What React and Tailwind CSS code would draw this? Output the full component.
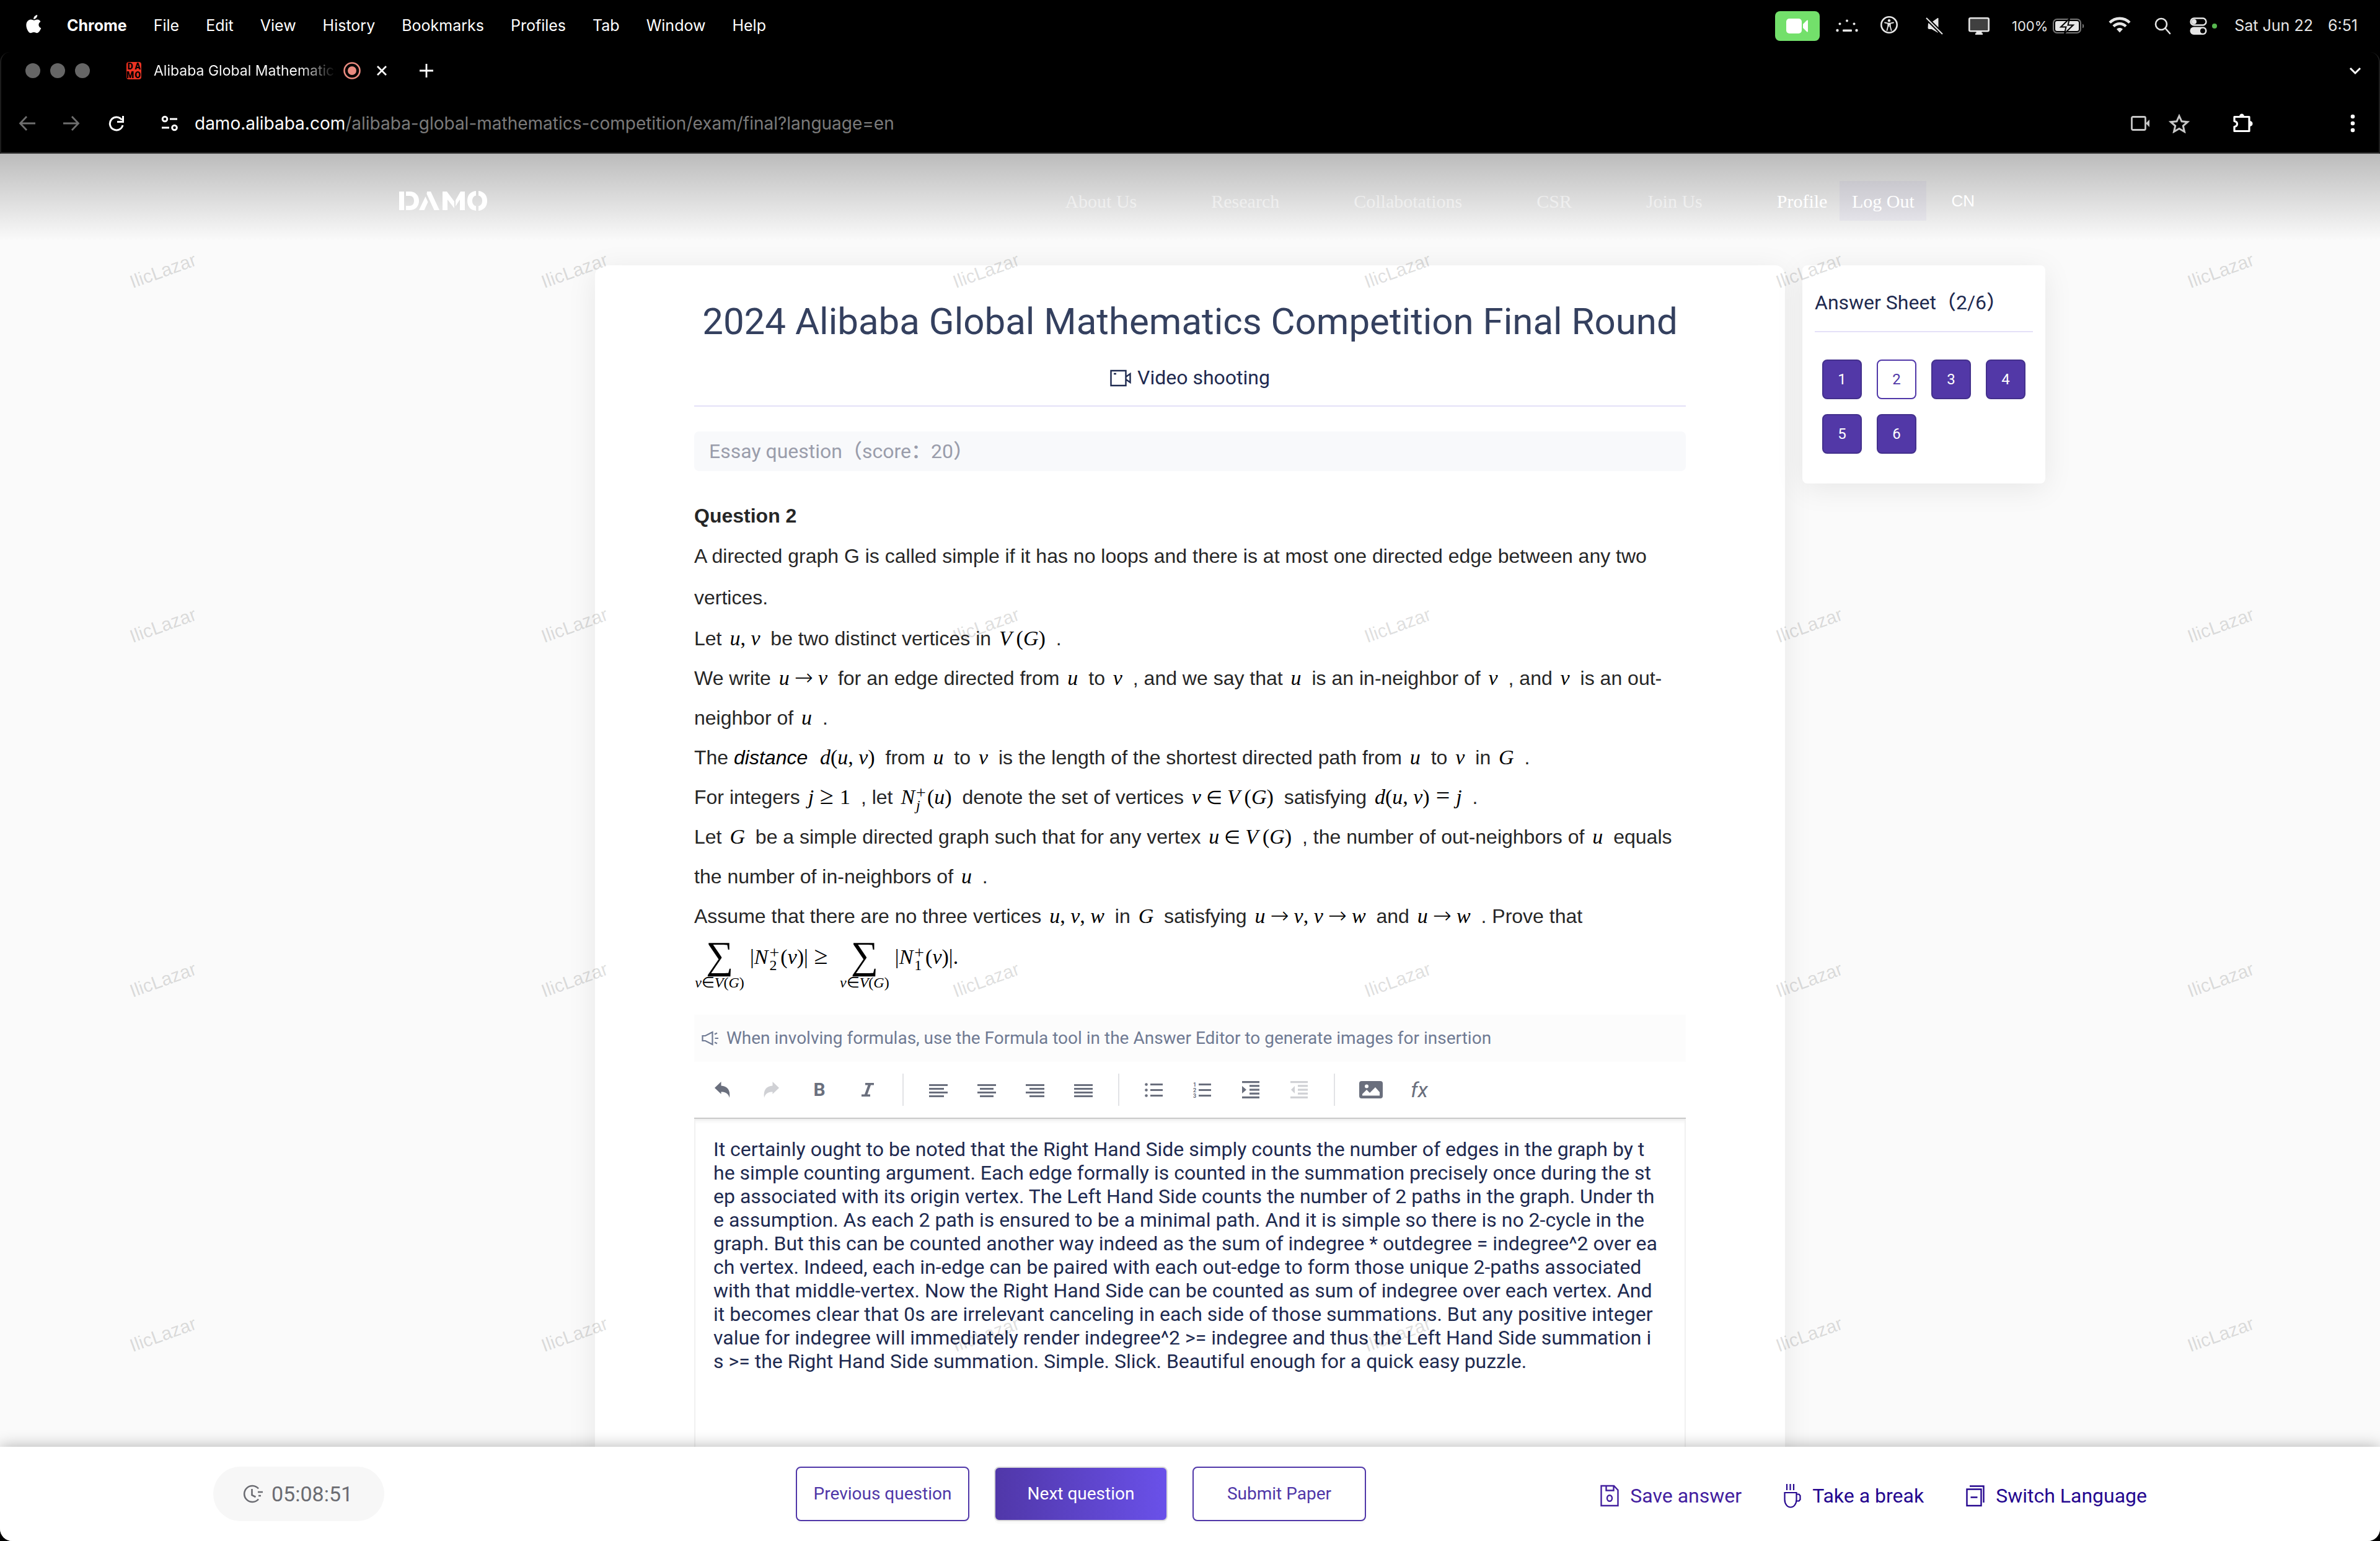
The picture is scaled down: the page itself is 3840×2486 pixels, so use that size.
import React from "react";

const SANS = "font-['Liberation_Sans',Arial,sans-serif]";
const ROBOTO = "font-[Roboto,'Noto_Sans_CJK_SC',sans-serif]";

/* ---------- system menu bar ---------- */

const MENUS = ["File", "Edit", "View", "History", "Bookmarks", "Profiles", "Tab", "Window", "Help"];

function MenuBar() {
  return (
    <header className="flex h-[84px] shrink-0 items-center bg-black pl-[42px] pr-9 font-[Inter,sans-serif] text-[25px] text-white">
      <svg className="mb-1 h-8 w-[26px]" viewBox="0 0 26 32" fill="#fff" aria-hidden="true">
        <path d="M18.2 0c.2 1.8-.5 3.500-1.600 4.800-1.100 1.300-2.800 2.200-4.400 2.100-.2-1.700.6-3.500 1.600-4.600C14.900 1 16.800.1 18.200 0z" />
        <path d="M23.400 10.900c-2 1.200-3 2.900-3 5 0 2.500 1.500 4.500 3.900 5.400-.5 1.500-1.200 2.900-2.100 4.200-1.300 1.900-2.600 3.700-4.700 3.700-2 0-2.600-1.200-4.900-1.200s-3.100 1.200-4.900 1.300c-2 .1-3.500-2-4.800-3.900C.5 21.800-1 14.900 2 10.800c1.300-2 3.500-3.300 5.800-3.300 2.200 0 3.500 1.200 5.300 1.200 1.700 0 2.800-1.200 5.300-1.200 1.900 0 3.800 1 5 3.400z" />
      </svg>
      <nav className="ml-10 flex items-center gap-[43px]">
        <button className="font-bold">Chrome</button>
        {MENUS.map((m) => (
          <button key={m}>{m}</button>
        ))}
      </nav>
      <div className="ml-auto flex items-center">
        <span className="flex h-12 w-[72px] items-center justify-center rounded-lg bg-[#73e06b]">
          <svg className="h-[24px] w-[36px]" viewBox="0 0 36 24" fill="#fff" aria-hidden="true">
            <rect x="0" y="0" width="25" height="24" rx="5" />
            <path d="M27 9l6-6c1.200-1 2-.6 2 .8v16.400c0 1.400-.8 1.800-2 .8l-6-6z" />
          </svg>
        </span>
        <svg className="ml-[26px] h-6 w-9" viewBox="0 0 36 24" fill="#e6e6e6" aria-hidden="true">
          <circle cx="2.500" cy="19" r="2.200" /><circle cx="33.500" cy="19" r="2.200" />
          <circle cx="6.500" cy="8.500" r="2" /><circle cx="29.500" cy="8.500" r="2" /><circle cx="18" cy="3.500" r="2" />
          <rect x="11" y="17.500" width="15" height="3.500" rx="1" />
        </svg>
        <svg className="ml-9 mb-1 size-7" viewBox="0 0 28 28" fill="none" stroke="#e6e6e6" aria-hidden="true">
          <circle cx="14" cy="14" r="12.700" strokeWidth="2.600" />
          <circle cx="14" cy="7.200" r="2.200" fill="#e6e6e6" stroke="none" />
          <path d="M7 10.500l5 1.200h4l5-1.200M14 12v4M12.200 12v4.500L10.500 23M15.800 12v4.500L17.500 23" strokeWidth="1.800" strokeLinecap="round" />
        </svg>
        <svg className="ml-[45px] h-7 w-7" viewBox="0 0 28 28" aria-hidden="true">
          <path d="M4 9.500L8 9 19 1.200c1-.7 1.500-.2 1.500 1v21c0 1.500-.8 1.800-1.800 1L9.500 19H6c-1.500 0-2.500-1-2.500-2z" fill="#e6e6e6" />
          <path d="M1 1l26 26" stroke="#000" strokeWidth="6" />
          <path d="M1 1l26 26" stroke="#e6e6e6" strokeWidth="2" />
        </svg>
        <svg className="ml-[41px] h-7 w-[34px]" viewBox="0 0 34 28" aria-hidden="true">
          <rect x="1.300" y="1.300" width="31.400" height="21" rx="2" fill="#404040" stroke="#e6e6e6" strokeWidth="2.600" />
          <path d="M12.500 23h9v2.500h1.500v2.500h-12v-2.500h1.500z" fill="#e6e6e6" />
        </svg>
        <span className="ml-9 text-[22px] text-[#e6e6e6]">100%</span>
        <svg className="ml-2 h-6 w-[52px]" viewBox="0 0 52 24" aria-hidden="true">
          <rect x="1" y="1" width="44" height="22" rx="6" fill="none" stroke="#777" strokeWidth="2" />
          <rect x="4" y="4" width="38" height="16" rx="3" fill="#e6e6e6" />
          <path d="M48 8.500c3 1 3 6 0 7z" fill="#777" />
          <path d="M27 0L13 13.500h8.500L19 24l14-13.500h-8.500z" fill="#e6e6e6" stroke="#000" strokeWidth="2" />
        </svg>
        <svg className="ml-[38px] mb-1 h-[26px] w-[36px]" viewBox="0 0 36 26" fill="none" stroke="#e6e6e6" strokeWidth="4.500" aria-hidden="true">
          <path d="M2 9.500c9-9 23-9 32 0" /><path d="M8 15.500c5.600-5.600 14.400-5.600 20 0" />
          <path d="M18 25.500l-5-5.500c3-2.600 7-2.600 10 0z" fill="#e6e6e6" stroke="none" />
        </svg>
        <svg className="ml-[38px] h-7 w-7" viewBox="0 0 28 28" fill="none" stroke="#e6e6e6" strokeWidth="2.600" strokeLinecap="round" aria-hidden="true">
          <circle cx="11" cy="11" r="9" /><path d="M17.500 17.500L25 26" />
        </svg>
        <svg className="ml-[29px] h-7 w-7" viewBox="0 0 28 28" fill="none" stroke="#e6e6e6" strokeWidth="2.400" aria-hidden="true">
          <rect x="1.500" y="1.500" width="25" height="11" rx="5.500" /><circle cx="7" cy="7" r="4" fill="#e6e6e6" stroke="none" />
          <rect x="0.500" y="15.500" width="27" height="12.500" rx="6" fill="#e6e6e6" stroke="none" /><circle cx="21" cy="21.700" r="4" fill="#000" stroke="none" />
        </svg>
        <span className="ml-2 size-2 rounded-full bg-[#57b84f]" />
        <span className="ml-7 text-[#e6e6e6]">Sat Jun 22</span>
        <span className="ml-6 text-[#e6e6e6]">6:51</span>
      </div>
    </header>
  );
}

/* ---------- browser chrome ---------- */

function TabStrip() {
  return (
    <div className="flex h-[60px] shrink-0 items-center rounded-t-2xl border-x-2 border-[#1c1c1c] bg-black pl-[39px] pr-[26px] text-white">
      <div className="flex gap-4">
        <span className="size-6 rounded-full bg-[#666]" />
        <span className="size-6 rounded-full bg-[#666]" />
        <span className="size-6 rounded-full bg-[#666]" />
      </div>
      <span className="ml-[59px] grid h-[28px] w-6 grid-cols-2 place-items-center rounded-sm bg-[#ec3323] font-[Roboto,sans-serif] text-[14px] leading-[14px] font-black text-black">
        <span>D</span><span>A</span><span>M</span><span>O</span>
      </span>
      <span className="ml-5 w-[294px] overflow-hidden bg-gradient-to-r from-white from-80% to-transparent bg-clip-text font-[Inter,sans-serif] text-[23px] whitespace-nowrap text-transparent">
        Alibaba Global Mathematics
      </span>
      <svg className="ml-3 size-7" viewBox="0 0 28 28" aria-hidden="true">
        <circle cx="14" cy="14" r="12.500" fill="none" stroke="#e98b80" strokeWidth="2.600" /><circle cx="14" cy="14" r="7" fill="#e98b80" />
      </svg>
      <button className="ml-[24px]" aria-label="Close tab">
        <svg className="size-5" viewBox="0 0 20 20" stroke="#fff" strokeWidth="2.800"><path d="M3 3l14 14M17 3L3 17" /></svg>
      </button>
      <button className="ml-[51px]" aria-label="New tab">
        <svg className="size-[22px]" viewBox="0 0 22 22" stroke="#fff" strokeWidth="2.800"><path d="M11 0v22M0 11h22" /></svg>
      </button>
      <button className="ml-auto" aria-label="Search tabs">
        <svg className="h-5 w-6" viewBox="0 0 24 20" fill="none" stroke="#fff" strokeWidth="3"><path d="M4 6l8 8 8-8" /></svg>
      </button>
    </div>
  );
}

function AddressBar() {
  return (
    <div className="flex h-[104px] shrink-0 items-center border-x-2 border-b-2 border-[#1c1c1c] border-b-[#3a3a3a] bg-black pt-2 pl-[28px] pr-[38px]">
      <button aria-label="Back"><svg className="h-6 w-7" viewBox="0 0 28 24" fill="none" stroke="#6e6e6e" strokeWidth="2.800"><path d="M27 12H3M13 1L2.500 12 13 23" /></svg></button>
      <button className="ml-[43px]" aria-label="Forward"><svg className="h-6 w-7" viewBox="0 0 28 24" fill="none" stroke="#6e6e6e" strokeWidth="2.800"><path d="M1 12h24M15 1l10.500 11L15 23" /></svg></button>
      <button className="ml-[45px]" aria-label="Reload">
        <svg className="h-[26px] w-7" viewBox="0 0 28 26" fill="none" stroke="#fff" strokeWidth="3"><path d="M22.500 7.500A10.500 10.500 0 1 0 24 16" /><path d="M24.500 1v9.500h-9.500" /></svg>
      </button>
      <svg className="ml-[58px] h-[26px] w-[28px]" viewBox="0 0 28 26" fill="none" stroke="#fff" strokeWidth="3" aria-hidden="true">
        <circle cx="6" cy="6" r="3.800" /><path d="M14 6h12" /><circle cx="21.500" cy="20" r="3.800" /><path d="M1 20h12" />
      </svg>
      <div role="textbox" aria-label="Address" className="ml-[26px] flex-1 font-[Inter,sans-serif] text-[28px] text-[#7a7a7a]">
        <span className="text-white">damo.alibaba.com</span>/alibaba-global-mathematics-competition/exam/final?language=en
      </div>
      <svg className="h-6 w-8" viewBox="0 0 32 24" fill="none" stroke="#c7c7c7" strokeWidth="2.800" aria-hidden="true">
        <rect x="1.500" y="1.500" width="22" height="21" rx="2" /><path d="M24 12l6-6v12z" fill="#c7c7c7" stroke="none" />
      </svg>
      <svg className="ml-[29px] h-8 w-[34px]" viewBox="0 0 34 32" fill="none" stroke="#c7c7c7" strokeWidth="3" aria-hidden="true">
        <path d="M17 4l4 8.800 9.500.9-7.200 6.300 2.200 9.500L17 24.500l-8.500 5 2.200-9.500L3.500 13.700l9.500-.9z" />
      </svg>
      <svg className="ml-[69px] h-8 w-[34px]" viewBox="0 0 34 32" aria-hidden="true">
        <path d="M3 5.500h24v23H3v-7c6-1 6-8 0-9z" fill="none" stroke="#fff" strokeWidth="3.200" strokeLinejoin="round" />
        <path d="M11 5c0-6 8-6 8 0zM28 12c6 0 6 9 0 9z" fill="#fff" />
      </svg>
      <svg className="ml-[156px] h-[30px] w-2" viewBox="0 0 8 30" fill="#fff" aria-hidden="true">
        <circle cx="4" cy="4" r="3.300" /><circle cx="4" cy="15" r="3.300" /><circle cx="4" cy="26" r="3.300" />
      </svg>
    </div>
  );
}

/* ---------- site header ---------- */

const NAV = ["About Us", "Research", "Collabotations", "CSR", "Join Us"];

function SiteHeader() {
  return (
    <header className="flex h-[140px] items-center bg-gradient-to-b from-black/25 to-transparent pt-3 pl-[644px] pr-[654px] font-['Liberation_Serif','Times_New_Roman',serif] text-[30px] text-white">
      <a href="#home" aria-label="DAMO">
        <svg className="h-8 w-[144px]" viewBox="0 0 144 32" fill="#fff" aria-hidden="true">
          <path d="M0 1h8v30H0zM11 1h6c9 0 15 6 15 15s-6 15-15 15h-6v-7h6c4.500 0 7-3 7-8s-2.500-8-7-8h-6z" />
          <path d="M45 1h6l14 30h-8.500L44.500 5zM42.500 9l4 9-6 13H32z" />
          <path d="M70 1h7l12 16v11l-11-14v17h-8zM91 15l8-14h7v30h-8V14l-7 11z" />
          <path d="M124 0v7.500c-4 1-6 4-6 8.500s2 7.500 6 8.500V32c-9-1-14-7-14-16s5-15 14-16zM128 0v7.500c4 1 6 4 6 8.500s-2 7.500-6 8.500V32c9-1 14-7 14-16s-5-15-14-16z" />
        </svg>
      </a>
      <nav className="ml-auto flex gap-[120px] text-white/50">
        {NAV.map((n) => (
          <a key={n} href="#nav">{n}</a>
        ))}
      </nav>
      <a href="#profile" className="ml-[120px]">Profile</a>
      <button className="ml-5 h-16 w-[140px] bg-[#5037a8]/5">Log Out</button>
      <a href="#cn" className={"ml-10 text-[26px] " + SANS}>CN</a>
    </header>
  );
}

/* ---------- question ---------- */

function M({ children }) {
  return <span className="mr-2 ml-1 font-['Liberation_Serif','Times_New_Roman',serif] text-[34px] leading-none text-black italic">{children}</span>;
}
const Up = ({ children }) => <span className="not-italic">{children}</span>;
const Arrow = () => <span className="mx-2 not-italic font-['DejaVu_Sans',sans-serif] text-[36px] leading-none font-extralight">→</span>;
const In = () => <span className="mx-2 not-italic font-['DejaVu_Sans',sans-serif] text-[30px] leading-none font-extralight">∈</span>;
const Rel = ({ children }) => <span className="mx-[10px] not-italic text-[40px] leading-none">{children}</span>;
const VG = () => <>V<Up>&thinsp;(</Up>G<Up>)</Up></>;
function Scripts({ sub }) {
  return (
    <span className="mx-[2px] inline-flex flex-col items-start align-middle text-[24px] leading-5 not-italic">
      <span className="text-[28px]">+</span>
      <span className={sub === "j" ? "italic" : ""}>{sub}</span>
    </span>
  );
}
function Sum() {
  return (
    <span className="flex w-[82px] flex-col items-center">
      <span className="h-[56px] text-[62px] leading-[58px] not-italic">∑</span>
      <span className="text-[24px] leading-[34px] whitespace-nowrap">v<Up>∈</Up>V<Up>(</Up>G<Up>)</Up></span>
    </span>
  );
}

function Question() {
  return (
    <section className={"mt-10 text-[32px] leading-[64px] text-[#262626] " + SANS}>
      <h2 className="font-bold">Question 2</h2>
      <p className="leading-[67px]">A directed graph G is called simple if it has no loops and there is at most one directed edge between any two<br />vertices.</p>
      <p>Let <M>u<Up>,</Up> v</M> be two distinct vertices in <M><VG /></M> .</p>
      <p>We write <M>u<Arrow />v</M> for an edge directed from <M>u</M> to <M>v</M> , and we say that <M>u</M> is an in-neighbor of <M>v</M> , and <M>v</M> is an out-<br />neighbor of <M>u</M> .</p>
      <p>The <em className="text-black">distance</em> <M>&thinsp;d<Up>(</Up>u<Up>,</Up> v<Up>)</Up></M> from <M>u</M> to <M>v</M> is the length of the shortest directed path from <M>u</M> to <M>v</M> in <M>G</M> .</p>
      <p className="h-16">For integers <M>j<Rel>≥</Rel><Up>1</Up></M> , let <M>N<Scripts sub="j" /><Up>(</Up>u<Up>)</Up></M> denote the set of vertices <M>v<In /><VG /></M> satisfying <M>d<Up>(</Up>u<Up>,</Up> v<Up>)</Up><Rel>=</Rel>j</M> .</p>
      <p>Let <M>G</M> be a simple directed graph such that for any vertex <M>u<In /><VG /></M> , the number of out-neighbors of <M>u</M> equals<br />the number of in-neighbors of <M>u</M> .</p>
      <p>Assume that there are no three vertices <M>u<Up>,</Up> v<Up>,</Up> w</M> in <M>G</M> satisfying <M>u<Arrow />v<Up>,</Up> v<Arrow />w</M> and <M>u<Arrow />w</M> . Prove that</p>
      <div className="flex h-[127px] items-start pt-[2px] font-['Liberation_Serif','Times_New_Roman',serif] text-[34px] text-black italic">
        <Sum />
        <span className="mx-2 whitespace-nowrap"><Up>|</Up>N<Scripts sub="2" /><Up>(</Up>v<Up>)|</Up><Rel>≥</Rel></span>
        <Sum />
        <span className="ml-2 whitespace-nowrap"><Up>|</Up>N<Scripts sub="1" /><Up>(</Up>v<Up>)|.</Up></span>
      </div>
    </section>
  );
}

/* ---------- answer editor ---------- */

const BARS = {
  left: [[0, 30], [0, 24], [0, 30], [0, 24]],
  center: [[0, 30], [4, 22], [0, 30], [4, 22]],
  right: [[0, 30], [6, 24], [0, 30], [6, 24]],
  justify: [[0, 30], [0, 30], [0, 30], [0, 30]],
};

function AlignIcon({ kind }) {
  return (
    <svg className="h-[26px] w-[30px]" viewBox="0 0 30 26" fill="#6a6f7d" aria-hidden="true">
      {BARS[kind].map(([x, w], i) => <rect key={i} x={x} y={4 + i * 6} width={w} height="3" />)}
    </svg>
  );
}

function ListIcon({ ordered }) {
  return (
    <svg className="h-[26px] w-[30px]" viewBox="0 0 30 26" fill="#6a6f7d" aria-hidden="true">
      {[3, 12, 21].map((y, i) => (
        <g key={y}>
          {ordered
            ? <text x="0" y={y + 5} fontSize="9" fontWeight="700" fontFamily="Roboto, sans-serif">{i + 1}</text>
            : <circle cx="2.500" cy={y + 1.500} r="2.300" />}
          <rect x="9" y={y} width="20" height="3" />
        </g>
      ))}
    </svg>
  );
}

function IndentIcon({ out }) {
  return (
    <svg className="h-[30px] w-[28px]" viewBox="0 0 28 30" fill={out ? "#d0d1d5" : "#6a6f7d"} aria-hidden="true">
      <path d={out ? "M7 9v12l-6-6z" : "M0 9v12l7-6z"} />
      <rect y="1" width="28" height="3.200" /><rect x="12" y="7.200" width="16" height="3.200" />
      <rect x="12" y="13.400" width="16" height="3.200" /><rect x="12" y="19.600" width="16" height="3.200" /><rect y="25.800" width="28" height="3.200" />
    </svg>
  );
}

function Tool({ label, children }) {
  return <button aria-label={label} className="flex h-[60px] w-[78px] items-center justify-center text-[#6a6f7d]">{children}</button>;
}
const Divider = () => <span className="mx-[17px] h-[52px] w-[2px] bg-[#e2e3e6]" />;

const ANSWER = [
  "It certainly ought to be noted that the Right Hand Side simply counts the number of edges in the graph by t",
  "he simple counting argument. Each edge formally is counted in the summation precisely once during the st",
  "ep associated with its origin vertex. The Left Hand Side counts the number of 2 paths in the graph. Under th",
  "e assumption. As each 2 path is ensured to be a minimal path. And it is simple so there is no 2-cycle in the",
  "graph. But this can be counted another way indeed as the sum of indegree * outdegree = indegree^2 over ea",
  "ch vertex. Indeed, each in-edge can be paired with each out-edge to form those unique 2-paths associated",
  "with that middle-vertex. Now the Right Hand Side can be counted as sum of indegree over each vertex. And",
  "it becomes clear that 0s are irrelevant canceling in each side of those summations. But any positive integer",
  "value for indegree will immediately render indegree^2 >= indegree and thus the Left Hand Side summation i",
  "s >= the Right Hand Side summation. Simple. Slick. Beautiful enough for a quick easy puzzle.",
].join("\n");

function Editor() {
  return (
    <section>
      <p className="flex h-[76px] items-center bg-[#fcfcfc] pl-3 text-[28px] font-[450] text-[#6f7a93]">
        <svg className="mr-3 h-6 w-7" viewBox="0 0 28 24" fill="none" stroke="#6f7a93" strokeWidth="2.200" aria-hidden="true">
          <path d="M1.500 8v8h4.500L17.500 22V2L6 8z" /><path d="M21 5.500l4-2M21.500 12H27M21 18.500l4 2" />
        </svg>
        When involving formulas, use the Formula tool in the Answer Editor to generate images for insertion
      </p>
      <div role="toolbar" aria-label="Formatting" className="flex h-[92px] items-center border-b-2 border-[#c9c9c9] pl-[7px]">
        <Tool label="Undo"><svg className="h-[28px] w-[26px]" viewBox="0 0 26 28" fill="#6a6f7d"><path d="M0 11L10.500 1v6.500C20 8 26 14 24 27c-2-7-6-9.500-13.500-9.500V21z" /></svg></Tool>
        <Tool label="Redo"><svg className="h-[28px] w-[26px]" viewBox="0 0 26 28" fill="#d0d1d5"><path d="M26 11L15.500 1v6.500C6 8 0 14 2 27c2-7 6-9.500 13.500-9.500V21z" /></svg></Tool>
        <Tool label="Bold"><span className="text-[30px] leading-none font-bold">B</span></Tool>
        <Tool label="Italic"><svg className="h-[22px] w-5" viewBox="0 0 20 22" fill="#6a6f7d"><path d="M6 0h14v3.500h-5L9.500 18.500H14V22H0v-3.500h5L10.500 3.500H6z" /></svg></Tool>
        <Divider />
        <Tool label="Align left"><AlignIcon kind="left" /></Tool>
        <Tool label="Align center"><AlignIcon kind="center" /></Tool>
        <Tool label="Align right"><AlignIcon kind="right" /></Tool>
        <Tool label="Justify"><AlignIcon kind="justify" /></Tool>
        <Divider />
        <Tool label="Bulleted list"><ListIcon /></Tool>
        <Tool label="Numbered list"><ListIcon ordered /></Tool>
        <Tool label="Increase indent"><IndentIcon /></Tool>
        <Tool label="Decrease indent"><IndentIcon out /></Tool>
        <Divider />
        <Tool label="Insert image">
          <svg className="ml-1 h-[30px] w-[38px]" viewBox="0 0 38 30"><rect y="1" width="38" height="28" rx="4" fill="#6a6f7d" /><circle cx="12" cy="9.500" r="3" fill="#fff" /><path d="M5 24.500V22l7-7 5 5 9-9 7 8v5.500z" fill="#fff" /></svg>
        </Tool>
        <Tool label="Insert formula"><span className="ml-1 text-[34px] leading-none italic">fx</span></Tool>
      </div>
      <textarea
        aria-label="Answer"
        defaultValue={ANSWER}
        wrap="off"
        spellCheck={false}
        className="block h-[620px] w-full resize-none overflow-hidden border-x-2 border-[#f1f1f1] bg-transparent px-[29px] pt-[30px] text-[32px] leading-[38px] font-[450] text-[#1e2a50] shadow-[inset_0_8px_10px_-8px_rgba(0,0,0,0.15)] outline-none"
      />
    </section>
  );
}

/* ---------- panels ---------- */

function AnswerSheet() {
  return (
    <aside className="ml-7 h-[352px] w-[392px] rounded-lg bg-white px-5 shadow-[0_8px_48px_rgba(0,0,0,0.08)]">
      <h2 className="flex h-[108px] items-center border-b-2 border-[#e4e0f8] pt-[14px] text-[32px] font-[450] text-[#1e2a50]">Answer Sheet（2/6）</h2>
      <div className="mt-11 ml-3 grid grid-cols-[repeat(4,64px)] gap-6">
        {[1, 2, 3, 4, 5, 6].map((n) => (
          <button
            key={n}
            className={
              n === 2
                ? "h-16 rounded-lg border-2 border-[#5037a8] bg-white text-[24px] font-[450] text-[#5037a8]"
                : "h-16 rounded-lg border-2 border-[#43308c] bg-[#5238a7] text-[24px] font-[450] text-white"
            }
          >
            {n}
          </button>
        ))}
      </div>
    </aside>
  );
}

function Watermarks() {
  return (
    <div aria-hidden="true" className={"pointer-events-none absolute -top-[98px] -left-[69px] grid auto-rows-[572px] grid-cols-[repeat(6,664px)] place-items-center text-[30px] text-black/15 " + SANS}>
      {Array.from({ length: 24 }, (_, i) => (
        <span key={i} className="-rotate-20">IlicLazar</span>
      ))}
    </div>
  );
}

function ActionBar() {
  return (
    <footer className={"relative z-10 grid h-[152px] shrink-0 grid-cols-[940px_auto_1fr] items-center bg-white px-[344px] text-[28px] font-[450] text-[#5037a8] shadow-[0_0_24px_rgba(0,0,0,0.3)] " + ROBOTO}>
      <div className="flex h-[88px] w-[276px] items-center rounded-full bg-[#f7f7f7] pl-12 text-[34px] font-[450] text-[#6b6c72]">
        <svg className="mr-[14px] size-8" viewBox="0 0 32 32" fill="none" stroke="#6b6c72" strokeWidth="2.600" aria-hidden="true">
          <path d="M25 7.500A13 13 0 1 0 25 24.500" /><path d="M14.500 8v10l6 3M24 13h8M25 19h4" />
        </svg>
        05:08:51
      </div>
      <div className="flex gap-10">
        <button className="h-[88px] w-[280px] rounded-lg border-2 border-[#5037a8] bg-white shadow-[0_4px_0_rgba(0,0,0,0.02)]">Previous question</button>
        <button className="h-[88px] w-[280px] rounded-lg border-2 border-[#d9d9d9] bg-gradient-to-r from-[#5037a8] to-[#6a51ea] bg-origin-border text-white shadow-[0_4px_0_rgba(0,0,0,0.02)]">Next question</button>
        <button className="h-[88px] w-[280px] rounded-lg border-2 border-[#5037a8] bg-white shadow-[0_4px_0_rgba(0,0,0,0.02)]">Submit Paper</button>
      </div>
      <div className="flex items-center justify-end gap-[68px] pt-[6px] pr-8 text-[32px] text-[#25078f]">
        <button className="flex items-center gap-[18px] text-[#43209f]">
          <svg className="h-9 w-[30px]" viewBox="0 0 30 36" fill="none" stroke="currentColor" strokeWidth="2.400" aria-hidden="true">
            <path d="M1.500 2h20.500l6.500 7v25h-27zM9.500 2v7.500h12V2" /><ellipse cx="15" cy="22" rx="4" ry="4.800" />
          </svg>
          Save answer
        </button>
        <button className="flex items-center gap-[18px]">
          <svg className="h-[40px] w-[28px]" viewBox="0 0 28 40" fill="none" stroke="currentColor" strokeWidth="2.200" aria-hidden="true">
            <path d="M5 1v10M10.500 1v10M16 1v10M1.500 15h19v11c0 7-4 12.500-9.500 12.500S1.500 33 1.500 26zM20.500 17.500h4l2 2.500v6l-2 2.500h-4" />
          </svg>
          Take a break
        </button>
        <button className="flex items-center gap-[18px]">
          <svg className="h-9 w-[30px]" viewBox="0 0 30 36" fill="none" stroke="currentColor" strokeWidth="2.400" aria-hidden="true">
            <path d="M1.500 7.500h23v26.500h-23zM6 2.500h22.500V29M7.500 20.500h11" />
          </svg>
          Switch Language
        </button>
      </div>
    </footer>
  );
}

export default function App() {
  return (
    <div className="flex h-screen flex-col overflow-hidden bg-black">
      <MenuBar />
      <TabStrip />
      <AddressBar />
      <div className="flex min-h-0 flex-1 flex-col overflow-hidden rounded-b-[20px] bg-[#fafafa]">
        <main className={"relative min-h-0 flex-1 overflow-hidden " + ROBOTO}>
          <SiteHeader />
          <div className="mt-10 grid grid-cols-[1fr_1920px_1fr] items-start">
            <article className="col-start-2 rounded-t-2xl bg-white px-40 shadow-[0_8px_48px_rgba(0,0,0,0.08)]">
              <h1 className="pt-14 text-center text-[60px] leading-[70px] font-[450] whitespace-nowrap text-[#34405f]">2024 Alibaba Global Mathematics Competition Final Round</h1>
              <p className="mt-[34px] flex items-center justify-center gap-[10px] border-b-2 border-[#e4e0f8] pb-[23px] text-[32px] leading-[43px] font-[450] text-[#1e2a50]">
                <svg className="h-[28px] w-[34px]" viewBox="0 0 34 28" fill="none" stroke="currentColor" strokeWidth="2.400" aria-hidden="true">
                  <path d="M1.500 2h24v24h-24zM25.500 12l7-5v14l-7-5M6 7h4" />
                </svg>
                Video shooting
              </p>
              <p className="mt-10 h-16 rounded-lg bg-[#f8f9fb] pl-6 text-[32px] leading-[64px] font-[450] text-[#9a9dab]">Essay question（score：20）</p>
              <Question />
              <Editor />
            </article>
            <AnswerSheet />
          </div>
          <Watermarks />
        </main>
        <ActionBar />
      </div>
    </div>
  );
}
